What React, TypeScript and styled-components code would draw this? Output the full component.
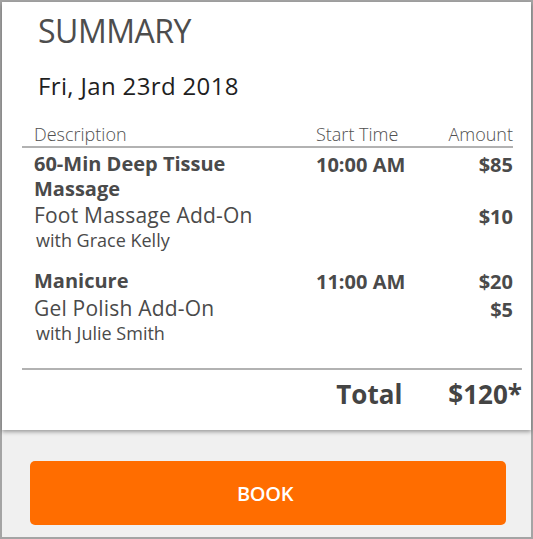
import React from "react";
import styled, { createGlobalStyle } from "styled-components";

const Global = createGlobalStyle`
  html, body { margin: 0; padding: 0; background: #ffffff; }
  * { box-sizing: border-box; }
`;

const Frame = styled.div`
  width: 533px;
  height: 539px;
  border: 2px solid #a4a4a4;
  background: #f0f0f0;
  display: flex;
  flex-direction: column;
  font-family: "Open Sans", "Noto Sans", sans-serif;
  color: #4a4a4a;
`;

const Card = styled.div`
  background: #ffffff;
  height: 428px;
  flex-shrink: 0;
  padding: 7px 18px 0 20px;
  box-shadow: 0 2px 4px rgba(0, 0, 0, 0.35);
  position: relative;
  z-index: 1;
`;

const Title = styled.h1`
  margin: 0 0 0 16px;
  font-size: 32px;
  font-weight: 400;
  line-height: 44px;
  color: #4d4d4d;
  letter-spacing: -0.5px;
`;

const DateLine = styled.div`
  margin: 17px 0 0 16px;
  font-size: 24px;
  line-height: 32px;
  color: #1f1f1f;
  letter-spacing: 0.35px;
`;

const Table = styled.div`
  margin-top: 21px;
`;

const Row = styled.div<{ $head?: boolean; $gap?: number }>`
  display: grid;
  grid-template-columns: 282px 1fr auto;
  padding: 0 0 0 12px;
  margin-top: ${(p) => p.$gap ?? 0}px;
  ${(p) =>
    p.$head &&
    `
    border-bottom: 2px solid #b2b2b2;
    padding-bottom: 1px;
  `}
`;

const Head = styled.div<{ $right?: boolean }>`
  font-size: 18px;
  line-height: 22px;
  font-weight: 300;
  color: #505050;
  text-align: ${(p) => (p.$right ? "right" : "left")};
`;

type CellKind = "name" | "addon" | "staff" | "value";

const Cell = styled.div<{ $kind: CellKind; $right?: boolean }>`
  font-size: ${(p) => (p.$kind === "addon" ? 21 : p.$kind === "staff" ? 18 : 20)}px;
  line-height: ${(p) => (p.$kind === "staff" ? 22 : 25)}px;
  font-weight: ${(p) => (p.$kind === "name" || p.$kind === "value" ? 700 : 400)};
  letter-spacing: ${(p) => (p.$kind === "addon" ? 0.2 : 0)}px;
  color: #4a4a4a;
  text-align: ${(p) => (p.$right ? "right" : "left")};
  padding-left: ${(p) => (p.$kind === "staff" ? 2 : 0)}px;
  padding-right: ${(p) => (p.$kind === "name" ? 24 : 0)}px;
  padding-top: ${(p) => (p.$kind === "value" ? 1 : 0)}px;
`;

const TotalRow = styled.div`
  margin-top: 24px;
  border-top: 2px solid #b2b2b2;
  display: flex;
  justify-content: flex-end;
  gap: 46px;
  padding-top: 7px;
  margin-right: -9px;
`;

const TotalText = styled.div`
  font-size: 26px;
  line-height: 34px;
  font-weight: 700;
  color: #444;
`;

const Footer = styled.div`
  flex: 1;
  display: flex;
  align-items: flex-start;
  padding: 31px 25px 0 28px;
`;

const BookButton = styled.button`
  width: 100%;
  height: 64px;
  border: none;
  border-radius: 5px;
  background: #ff6d00;
  color: #ffffff;
  font-family: "Open Sans", sans-serif;
  font-weight: 600;
  font-size: 20px;
  letter-spacing: -0.3px;
  padding: 0 6px 0 0;
`;

type Item = {
  name: string;
  time: string;
  price: string;
  addOn: string;
  addOnPrice: string;
  staff: string;
};

const items: Item[] = [
  {
    name: "60-Min Deep Tissue Massage",
    time: "10:00 AM",
    price: "$85",
    addOn: "Foot Massage Add-On",
    addOnPrice: "$10",
    staff: "with Grace Kelly",
  },
  {
    name: "Manicure",
    time: "11:00 AM",
    price: "$20",
    addOn: "Gel Polish Add-On",
    addOnPrice: "$5",
    staff: "with Julie Smith",
  },
];

export default function App() {
  return (
    <>
      <Global />
      <Frame>
        <Card>
          <Title>SUMMARY</Title>
          <DateLine>Fri, Jan 23rd 2018</DateLine>
          <Table>
            <Row $head>
              <Head>Description</Head>
              <Head>Start Time</Head>
              <Head $right>Amount</Head>
            </Row>
            {items.map((it, i) => (
              <React.Fragment key={it.name}>
                <Row $gap={i === 0 ? 3 : 17}>
                  <Cell $kind="name">{it.name}</Cell>
                  <Cell $kind="value">{it.time}</Cell>
                  <Cell $kind="value" $right>{it.price}</Cell>
                </Row>
                <Row $gap={2}>
                  <Cell $kind="addon">{it.addOn}</Cell>
                  <Cell $kind="addon" />
                  <Cell $kind="value" $right>{it.addOnPrice}</Cell>
                </Row>
                <Row>
                  <Cell $kind="staff">{it.staff}</Cell>
                </Row>
              </React.Fragment>
            ))}
          </Table>
          <TotalRow>
            <TotalText>Total</TotalText>
            <TotalText>$120*</TotalText>
          </TotalRow>
        </Card>
        <Footer>
          <BookButton>BOOK</BookButton>
        </Footer>
      </Frame>
    </>
  );
}
